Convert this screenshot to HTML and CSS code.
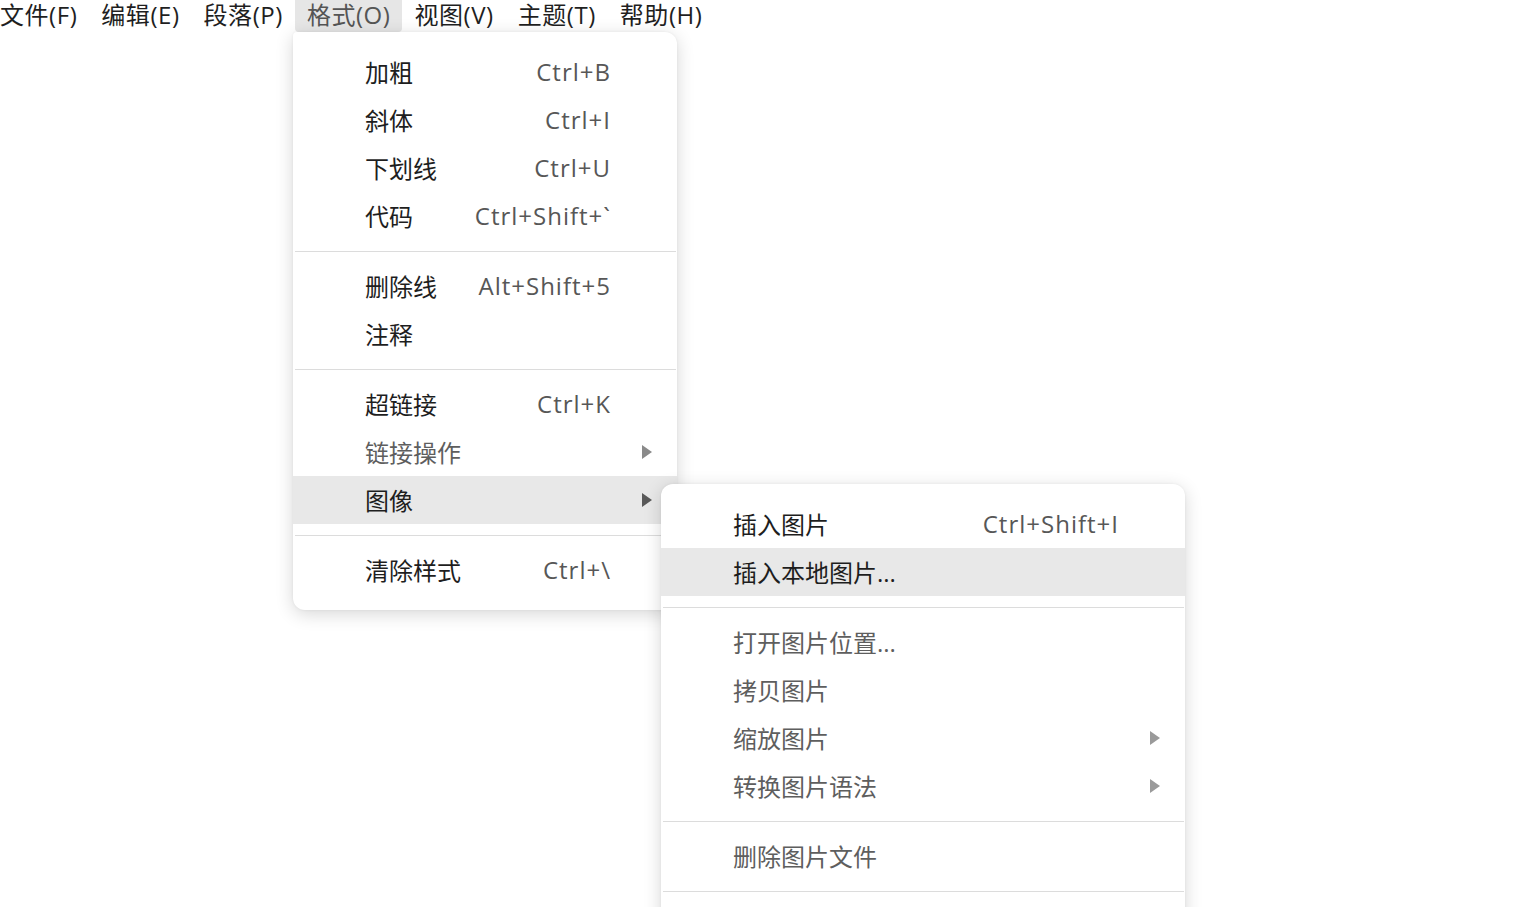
FILE: index.html
```html
<!DOCTYPE html>
<html lang="zh-CN">
<head>
<meta charset="utf-8">
<title>格式菜单</title>
<link rel="stylesheet" href="styles.css">
</head>
<body>
<nav class="menubar">
  <div class="top-item">文件(F)</div>
  <div class="top-item">编辑(E)</div>
  <div class="top-item">段落(P)</div>
  <div class="top-item active">格式(O)</div>
  <div class="top-item">视图(V)</div>
  <div class="top-item">主题(T)</div>
  <div class="top-item">帮助(H)</div>
</nav>

<div class="menu format-menu">
  <div class="row"><span class="label">加粗</span><span class="key">Ctrl+B</span></div>
  <div class="row"><span class="label">斜体</span><span class="key">Ctrl+I</span></div>
  <div class="row"><span class="label">下划线</span><span class="key">Ctrl+U</span></div>
  <div class="row"><span class="label">代码</span><span class="key">Ctrl+Shift+`</span></div>
  <div class="sep"></div>
  <div class="row"><span class="label">删除线</span><span class="key">Alt+Shift+5</span></div>
  <div class="row"><span class="label">注释</span></div>
  <div class="sep"></div>
  <div class="row"><span class="label">超链接</span><span class="key">Ctrl+K</span></div>
  <div class="row sub"><span class="label dim">链接操作</span><span class="arrow light"></span></div>
  <div class="row sub hover"><span class="label">图像</span><span class="arrow"></span></div>
  <div class="sep sep-last"></div>
  <div class="row"><span class="label">清除样式</span><span class="key">Ctrl+\</span></div>
</div>

<div class="menu image-menu">
  <div class="row"><span class="label">插入图片</span><span class="key">Ctrl+Shift+I</span></div>
  <div class="row hover"><span class="label">插入本地图片...</span></div>
  <div class="sep"></div>
  <div class="row"><span class="label dim">打开图片位置...</span></div>
  <div class="row"><span class="label dim">拷贝图片</span></div>
  <div class="row sub"><span class="label dim">缩放图片</span><span class="arrow pale"></span></div>
  <div class="row sub"><span class="label dim">转换图片语法</span><span class="arrow pale"></span></div>
  <div class="sep"></div>
  <div class="row"><span class="label dim">删除图片文件</span></div>
  <div class="sep"></div>
  <div class="row empty"></div>
</div>
</body>
</html>
```

FILE: styles.css
```css
html, body {
  margin: 0;
  padding: 0;
  background: #ffffff;
  overflow: hidden;
  height: 100%;
}

body {
  font-family: "Open Sans", "Noto Sans CJK SC", sans-serif;
  font-size: 24px;
  color: #222222;
}

.menubar {
  display: flex;
  margin-left: -12px;
  height: 32px;
}

.top-item {
  padding: 0 12px 2px 12px;
  line-height: 30px;
  height: 30px;
  color: #1f1f1f;
  white-space: nowrap;
  letter-spacing: 0.55px;
}

.top-item.active {
  background: #e6e6e6;
  color: #555555;
  border-radius: 0 0 4px 4px;
}

.menu {
  position: absolute;
  background: #ffffff;
  border-radius: 12px;
  box-shadow: 0 4px 18px rgba(0, 0, 0, 0.16), 0 0 3px rgba(0, 0, 0, 0.06);
  box-sizing: border-box;
}

.format-menu {
  left: 293px;
  top: 32px;
  width: 384px;
  padding: 16px 0 16px;
  border-top-left-radius: 4px;
}

.image-menu {
  left: 661px;
  top: 484px;
  width: 524px;
  height: 520px;
  padding: 16px 0 16px;
}

.row {
  display: flex;
  align-items: center;
  height: 48px;
  box-sizing: border-box;
  padding: 0 67px 1px 72px;
}

.row.sub {
  padding-right: 24px;
}

.row.hover {
  background: #e8e8e8;
}

.label {
  flex: 1;
  color: #1e1e1e;
  white-space: nowrap;
}

.label.dim {
  color: #5e5e5e;
}

.key {
  color: #575757;
  white-space: nowrap;
  letter-spacing: 1px;
  margin-right: -1px;
}

.arrow {
  width: 0;
  height: 0;
  border-top: 7px solid transparent;
  border-bottom: 7px solid transparent;
  border-left: 10px solid #595959;
  margin: 0 1px 0 0;
}

.arrow.light {
  border-left-color: #8a8a8a;
}

.arrow.pale {
  border-left-color: #9a9a9a;
}

.sep {
  height: 1px;
  background: #dcdcdc;
  margin: 11px 1px 10px 2px;
}

.sep-last {
  margin-top: 11px;
}
```
